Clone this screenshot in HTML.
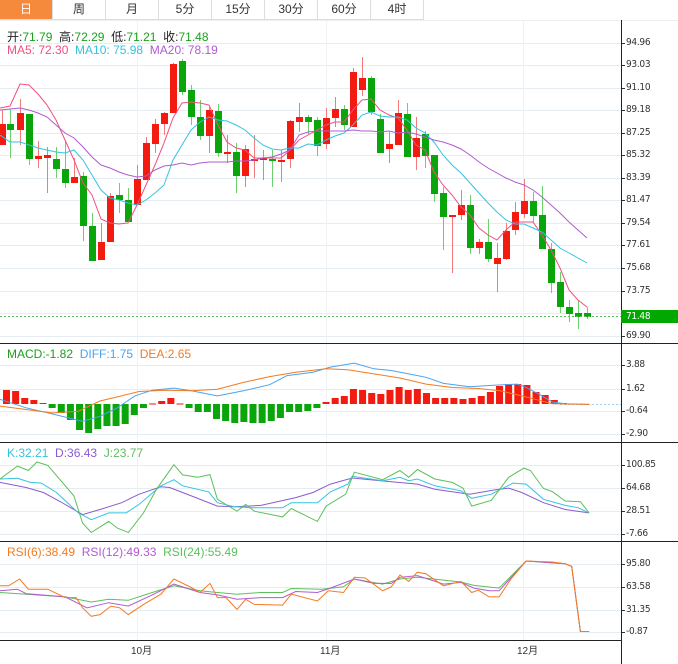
<!DOCTYPE html>
<html><head><meta charset="utf-8"><style>
body{margin:0;background:#fff;width:678px;height:664px;overflow:hidden;position:relative;font-family:"Liberation Sans","Noto Sans CJK SC",sans-serif}
.tabs{position:absolute;left:0;top:0;height:20px;display:flex}
.tab{width:52px;height:19px;border-right:1px solid #ddd;border-bottom:1px solid #ddd;font-size:12px;line-height:19px;text-align:center;color:#333}
.tab.on{background:#f5893c;color:#fff}
.t{position:absolute;font-size:12px;white-space:nowrap}
.ax{position:absolute;font-size:10px;color:#333;left:626px;font-family:"DejaVu Sans Condensed","Liberation Sans",sans-serif;letter-spacing:-0.3px}
svg{position:absolute;left:0;top:0}
</style></head><body>
<svg id="s" width="678" height="664"></svg>
<div class="tabs"><div class="tab on">日</div><div class="tab">周</div><div class="tab">月</div><div class="tab">5分</div><div class="tab">15分</div><div class="tab">30分</div><div class="tab">60分</div><div class="tab">4时</div></div>
<div class="t" style="left:7px;top:28px;color:#222">开:<span style="color:#1aa01a">71.79</span>&nbsp; 高:<span style="color:#1aa01a">72.29</span>&nbsp; 低:<span style="color:#1aa01a">71.21</span>&nbsp; 收:<span style="color:#1aa01a">71.48</span></div>
<div class="t" style="left:7px;top:43px"><span style="color:#f0507e">MA5: 72.30</span>&nbsp; <span style="color:#34c3e0">MA10: 75.98</span>&nbsp; <span style="color:#b05cd0">MA20: 78.19</span></div>
<div class="t" style="left:7px;top:347px"><span style="color:#1aa01a">MACD:-1.82</span>&nbsp; <span style="color:#4aa3ef">DIFF:1.75</span>&nbsp; <span style="color:#f57a20">DEA:2.65</span></div>
<div class="t" style="left:7px;top:446px"><span style="color:#34c3e0">K:32.21</span>&nbsp; <span style="color:#8a5cd0">D:36.43</span>&nbsp; <span style="color:#5cbf5c">J:23.77</span></div>
<div class="t" style="left:7px;top:545px"><span style="color:#f57a20">RSI(6):38.49</span>&nbsp; <span style="color:#b05cd0">RSI(12):49.33</span>&nbsp; <span style="color:#5cbf5c">RSI(24):55.49</span></div>
<div class="ax" style="top:37px">94.96</div><div class="ax" style="top:59px">93.03</div><div class="ax" style="top:82px">91.10</div><div class="ax" style="top:104px">89.18</div><div class="ax" style="top:127px">87.25</div><div class="ax" style="top:149px">85.32</div><div class="ax" style="top:172px">83.39</div><div class="ax" style="top:194px">81.47</div><div class="ax" style="top:217px">79.54</div><div class="ax" style="top:239px">77.61</div><div class="ax" style="top:262px">75.68</div><div class="ax" style="top:285px">73.75</div><div class="ax" style="top:330px">69.90</div>
<div style="position:absolute;left:621px;top:310px;width:57px;height:13px;background:#00a800"></div>
<div class="ax" style="top:311px;color:#fff">71.48</div>
<div class="ax" style="top:359px">3.88</div><div class="ax" style="top:383px">1.62</div><div class="ax" style="top:405px">-0.64</div><div class="ax" style="top:428px">-2.90</div>
<div class="ax" style="top:459px">100.85</div><div class="ax" style="top:482px">64.68</div><div class="ax" style="top:505px">28.51</div><div class="ax" style="top:528px">-7.66</div>
<div class="ax" style="top:558px">95.80</div><div class="ax" style="top:581px">63.58</div><div class="ax" style="top:604px">31.35</div><div class="ax" style="top:626px">-0.87</div>
<div class="t" style="left:131px;top:642px;font-size:10px;color:#333">10月</div>
<div class="t" style="left:320px;top:642px;font-size:10px;color:#333">11月</div>
<div class="t" style="left:517px;top:642px;font-size:10px;color:#333">12月</div>
<script>
var s=document.getElementById('s'),h='';
function L(x1,y1,x2,y2,c,w,d){h+='<line x1="'+x1+'" y1="'+y1+'" x2="'+x2+'" y2="'+y2+'" stroke="'+c+'" stroke-width="'+(w||1)+'"'+(d?' stroke-dasharray="'+d+'"':'')+'/>';}
function P(a,c,sx,sy,ox,oy){var p=[];for(var i=0;i<a.length;i+=2)p.push((a[i]*(sx||1)+(ox||0)).toFixed(1)+','+(a[i+1]*(sy||1)+(oy||0)).toFixed(1));h+='<polyline fill="none" stroke="'+c+'" stroke-width="1" points="'+p.join(' ')+'"/>';}
var g='#e6edf2';
[43,65,88,110,133,155,178,200,223,245,268,291,313,336,365,389,411,434,465,488,511,534,564,587,610,632].forEach(function(y){L(0,y+.5,621,y+.5,g);L(621,y+.5,625,y+.5,'#333');});
[137.5,326.5,523.5].forEach(function(x){L(x,20,x,640,'#eef2f5');});
L(0,20.5,678,20.5,'#eee');
var C=[[2,124,145,110,145,1],[10,130,124,109,158,0],[20,130,113,99,145,1],[29,114,159,114,165,0],[38,159,156,141,168,1],[47,158,155,147,193,1],[56,159,169,147,178,0],[65,169,183,140,188,0],[74,183,177,158,183,1],[83,176,226,172,241,0],[92,226,261,213,261,0],[101,260,242,223,260,1],[110,242,196,193,242,1],[119,195,200,183,213,0],[128,200,222,188,222,0],[137,205,179,165,205,1],[146,180,143,137,180,1],[155,144,124,119,153,1],[164,124,113,112,135,1],[173,113,64,63,113,1],[182,61,92,59,95,0],[191,90,117,85,125,0],[200,117,136,100,140,0],[209,136,110,107,153,1],[218,111,153,104,157,0],[227,153,152,135,163,1],[236,152,176,143,193,0],[245,176,149,145,187,1],[254,161,159,135,178,1],[263,160,158,150,180,1],[272,159,161,150,187,0],[281,162,160,150,182,1],[290,159,121,120,168,1],[299,122,117,103,132,1],[308,117,122,115,135,0],[317,120,146,117,156,0],[326,144,118,108,149,1],[335,118,109,97,127,1],[344,109,125,105,130,0],[353,127,72,68,127,1],[362,90,78,57,96,1],[371,78,112,76,115,0],[380,119,153,114,153,0],[389,149,144,132,163,1],[398,145,113,100,145,1],[407,114,157,103,157,0],[416,157,138,117,170,1],[425,134,156,131,168,0],[434,155,194,155,202,0],[443,193,217,187,250,0],[452,216,215,215,273,1],[461,215,205,190,220,1],[470,205,248,195,254,0],[479,248,242,239,254,1],[488,242,259,219,262,0],[497,264,258,243,292,1],[506,259,231,223,260,1],[515,230,212,202,235,1],[524,214,201,179,218,1],[533,201,216,192,222,0],[542,215,249,186,249,0],[551,249,283,243,293,0],[560,282,307,272,313,0],[569,307,314,300,322,0],[578,313,317,300,329,0],[587,313,317,307,319,0]];
C.forEach(function(c){var col=c[5]?'#f31a0f':'#0aa50a',wc=c[5]?'#f57a7a':'#6cd06c';L(c[0]+.5,c[3],c[0]+.5,c[4],wc);var t=Math.min(c[1],c[2]),b=Math.max(c[1],c[2]);if(b-t<2)b=t+2;h+='<rect x="'+(c[0]-3)+'" y="'+t+'" width="7" height="'+(b-t)+'" fill="'+col+'"/>';});
P([0,108,10,106,20,84,29,85,38,94,47,105,56,120,65,140,74,160,83,183,92,195,101,219,110,223,119,224,128,223,137,205,146,185,155,165,164,143,173,118,182,103,191,102,200,103,209,105,218,125,227,142,236,148,245,150,254,158,263,158,272,158,281,158,290,150,299,140,308,135,317,130,326,125,335,122,344,122,353,110,362,100,371,99,380,110,389,115,398,118,407,130,416,145,425,150,434,172,443,185,452,195,461,207,470,215,479,228,488,235,497,240,506,230,515,222,524,222,533,222,542,235,551,250,560,268,569,290,578,300,587,307],'#f0507e');
P([0,135,10,142,20,142,29,145,38,148,47,150,56,152,65,153,74,150,83,160,92,175,101,190,110,198,119,200,128,203,137,205,146,200,155,193,164,185,173,160,182,145,191,130,200,122,209,117,218,120,227,121,236,125,245,130,254,138,263,145,272,149,281,150,290,148,299,148,308,144,317,145,326,140,335,136,344,133,353,125,362,115,371,112,380,116,389,117,398,117,407,120,416,128,425,133,434,142,443,155,452,165,461,173,470,183,479,193,488,203,497,212,506,220,515,224,524,224,533,228,542,232,551,240,560,248,569,253,578,258,587,263],'#34c3e0');
P([0,110,10,109,20,108,29,110,38,113,47,117,56,125,65,133,74,138,83,147,92,157,101,165,110,168,119,172,128,175,137,177,146,176,155,170,164,166,173,165,182,163,191,165,200,163,209,162,218,162,227,162,236,161,245,161,254,160,263,158,272,157,281,154,290,150,299,135,308,132,317,131,326,131,335,131,344,131,353,130,362,131,371,131,380,132,389,131,398,133,407,132,416,134,425,137,434,140,443,142,452,145,461,149,470,155,479,162,488,168,497,173,506,178,515,182,524,185,533,190,542,197,551,205,560,213,569,222,578,230,587,238],'#b05cd0');
L(0,316.5,621,316.5,'#5cbf5c',1,'2,2');
var M=[14,13,6,4,1,-4,-9,-16,-26,-29,-25,-22,-22,-20,-11,-4,0,3,6,0,-4,-8,-8,-15,-17,-19,-18,-19,-19,-17,-14,-8,-8,-7,-4,2,6,8,15,14,11,10,14,17,14,15,11,6,6,6,5,6,8,12,18,20,20,19,12,9,4,1];
var z=404;M.forEach(function(v,k){var x=6.5+9.13*k-3.5;if(v>0)h+='<rect x="'+x+'" y="'+(z-v)+'" width="7" height="'+v+'" fill="#f31a0f"/>';else if(v<0)h+='<rect x="'+x+'" y="'+z+'" width="7" height="'+(-v)+'" fill="#0aa50a"/>';else L(x,z,x+7,z,'#f31a0f');});
L(560,z+.5,621,z+.5,'#9cd0f0',1,'2,2');
var sx=1/2.3,sy=1/2.95;
P([0,175,60,200,120,218,190,240,230,225,270,200,310,165,350,148,400,142,440,150,500,165,560,150,620,132,660,105,720,95,760,80,815,68,860,85,900,90,940,100,980,110,1020,128,1080,138,1140,133,1190,130,1210,140,1240,160,1270,183,1300,188,1355,190],'#4aa3ef',sx,sy,0,340);
P([0,195,60,205,120,215,180,210,230,180,270,168,320,152,380,148,440,150,500,145,560,125,620,108,680,95,750,85,800,88,860,100,920,112,980,130,1040,140,1100,143,1150,150,1200,165,1240,178,1270,188,1355,190],'#f57a20',sx,sy,0,340);
P([0,420,60,435,100,450,140,478,190,515,230,500,280,480,320,455,370,433,390,435,440,460,500,490,540,492,600,488,680,465,720,450,760,425,810,407,900,418,960,425,1000,440,1080,455,1140,442,1170,437,1200,450,1250,480,1300,500,1355,510],'#8a5cd0',sx,sy,0,340);
P([0,410,40,408,70,420,95,422,130,450,180,510,210,530,250,510,290,510,320,485,370,430,400,412,420,430,480,448,500,480,540,492,580,495,650,495,670,480,730,480,760,448,800,425,810,402,880,415,920,405,940,415,960,410,1000,430,1060,445,1085,467,1130,455,1180,422,1210,425,1250,470,1300,488,1330,495,1355,510],'#34c3e0',sx,sy,0,340);
P([0,410,40,372,65,385,85,360,110,370,170,460,190,540,210,568,250,535,270,555,295,568,330,510,360,440,400,368,420,398,455,405,483,397,500,470,545,505,565,485,585,505,650,522,670,497,730,535,750,490,795,455,815,390,880,412,920,385,940,405,960,382,1000,410,1040,420,1065,437,1085,490,1130,473,1170,405,1205,378,1220,385,1250,438,1270,447,1300,475,1335,477,1355,510],'#5cbf5c',sx,sy,0,340);
P([0,745,60,750,150,758,210,773,250,765,295,768,350,745,400,725,460,740,500,745,545,750,600,745,650,745,670,733,740,735,790,728,815,705,880,720,920,705,960,700,1060,714,1090,724,1148,732,1210,652,1300,660,1315,668,1335,860,1355,860],'#5cbf5c',sx,sy,0,340);
P([0,740,40,735,60,748,150,758,200,790,250,775,295,785,350,752,400,720,460,745,500,752,545,765,600,760,650,760,680,742,730,745,760,732,815,705,860,718,900,718,920,700,960,695,1020,720,1060,715,1090,732,1125,740,1148,740,1210,652,1300,660,1315,668,1335,860,1355,860],'#b05cd0',sx,sy,0,340);
P([0,725,20,725,45,705,65,735,110,735,150,760,175,760,190,790,210,815,230,810,255,785,275,790,295,810,330,780,370,750,400,705,440,730,460,745,483,718,500,760,520,760,545,795,565,765,585,780,650,782,670,750,730,770,755,740,790,745,815,700,840,702,880,740,900,728,920,693,940,712,960,685,980,690,1020,725,1060,712,1085,745,1100,738,1125,758,1148,758,1175,705,1210,652,1270,655,1300,660,1315,668,1335,860,1355,860],'#f57a20',sx,sy,0,340);
[343.5,442.5,541.5].forEach(function(y){L(0,y,678,y,'#222');});
L(0,640.5,621,640.5,'#222');L(621.5,20,621.5,664,'#222');
s.innerHTML=h;
</script>
</body></html>
